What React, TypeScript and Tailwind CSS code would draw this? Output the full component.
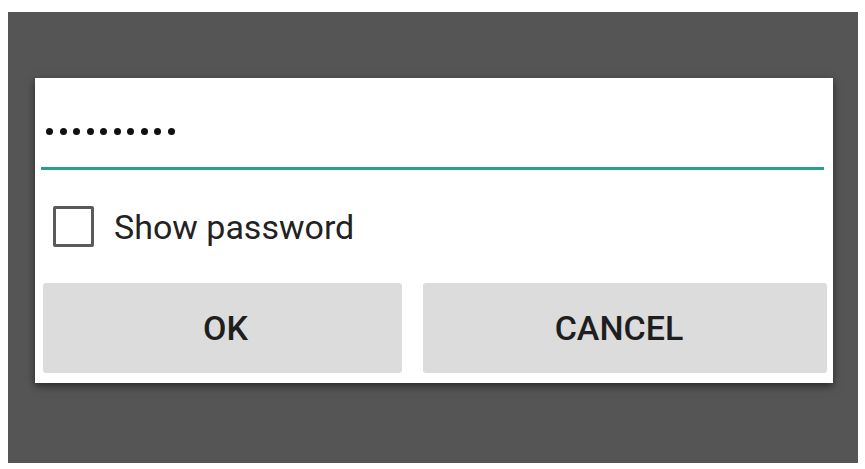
export default function App() {
  const dots = Array.from({ length: 10 });

  return (
    <div className="w-[865px] h-[469px] bg-white pt-[12px] pl-[8px] font-['Roboto',sans-serif]">
      {/* dimmed screen */}
      <div className="w-[850px] h-[451px] bg-[#555555] pt-[66px] pl-[27px]">
        {/* dialog */}
        <div className="w-[798px] h-[305px] bg-white shadow-[0_3px_8px_rgba(0,0,0,0.55)] flex flex-col">
          {/* password field */}
          <div className="ml-[6px] w-[783px] h-[89px] flex items-end pb-[32px] pl-[5px]">
            <div className="flex gap-[6.5px]">
              {dots.map((_, i) => (
                <span key={i} className="block w-[7px] h-[7px] rounded-full bg-[#111111]" />
              ))}
            </div>
          </div>
          <div className="ml-[6px] w-[783px] h-[3px] bg-[#26a08a]" />

          {/* show password */}
          <div className="flex items-center mt-[36px] ml-[18px] h-[41px]">
            <span className="block w-[41px] h-[41px] border-[3px] border-[#5a5a5a] rounded-[2px]" />
            <span className="ml-[20px] text-[34px] leading-none text-[#222222]">Show password</span>
          </div>

          {/* buttons */}
          <div className="flex mt-[36px] ml-[8px] gap-[21px]">
            <button className="w-[359px] h-[90px] bg-[#dcdcdc] rounded-[3px] pl-[6px] text-[34px] font-medium text-[#1e1e1e]">
              OK
            </button>
            <button className="w-[404px] h-[90px] bg-[#dcdcdc] rounded-[3px] pr-[12px] text-[34px] font-medium text-[#1e1e1e]">
              CANCEL
            </button>
          </div>
        </div>
      </div>
    </div>
  );
}
